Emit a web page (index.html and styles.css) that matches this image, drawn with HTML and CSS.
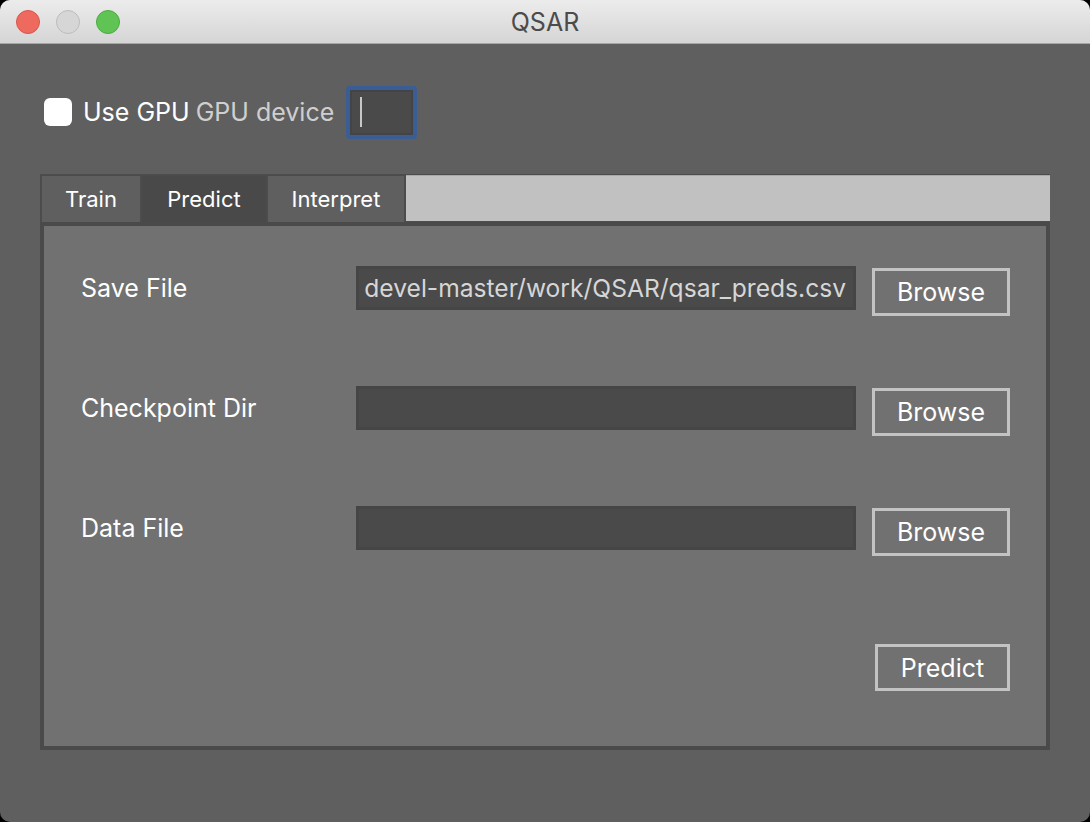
FILE: index.html
```html
<!DOCTYPE html>
<html>
<head>
<meta charset="utf-8">
<title>QSAR</title>
<link rel="stylesheet" href="styles.css">
</head>
<body>
<div class="window">
  <div class="titlebar">
    <div class="lights">
      <span class="light red"></span>
      <span class="light gray"></span>
      <span class="light green"></span>
    </div>
    <div class="title">QSAR</div>
  </div>
  <div class="content">
    <div class="gpu-row">
      <input type="checkbox" class="check">
      <span class="gpu-label">Use GPU</span>
      <span class="gpu-device">GPU device</span>
      <div class="spin"><span class="caret"></span></div>
    </div>
    <div class="tabs">
      <div class="tabbar">
        <div class="tab">Train</div>
        <div class="tab active">Predict</div>
        <div class="tab">Interpret</div>
        <div class="tab-fill"></div>
      </div>
      <div class="panel">
        <div class="row">
          <div class="label">Save File</div>
          <div class="field"><span class="field-text">devel-master/work/QSAR/qsar_preds.csv</span></div>
          <button class="btn">Browse</button>
        </div>
        <div class="row">
          <div class="label">Checkpoint Dir</div>
          <div class="field"></div>
          <button class="btn">Browse</button>
        </div>
        <div class="row">
          <div class="label">Data File</div>
          <div class="field"></div>
          <button class="btn">Browse</button>
        </div>
        <div class="action">
          <button class="btn predict">Predict</button>
        </div>
      </div>
    </div>
  </div>
</div>
</body>
</html>
```

FILE: styles.css
```css
* { box-sizing: border-box; }
html, body {
  margin: 0;
  padding: 0;
  background: #000;
}
body {
  font-family: "Inter", "Roboto", "Liberation Sans", sans-serif;
}
.window {
  width: 1090px;
  height: 822px;
  border-radius: 10px;
  overflow: hidden;
  background: #5f5f5f;
  display: flex;
  flex-direction: column;
}
.titlebar {
  height: 44px;
  flex: none;
  position: relative;
  background: linear-gradient(#ececec, #d5d5d5);
  border-bottom: 1px solid #a6a6a6;
  display: flex;
  align-items: center;
  justify-content: center;
}
.lights {
  position: absolute;
  left: 16px;
  top: 10px;
  display: flex;
  gap: 16px;
}
.light {
  width: 24px;
  height: 24px;
  border-radius: 50%;
  display: block;
}
.light.red { background: #ee6a5f; border: 1px solid #d8564c; }
.light.gray { background: #d6d6d6; border: 1px solid #bcbcbc; }
.light.green { background: #5fc454; border: 1px solid #4fa944; }
.title {
  font-size: 25px;
  color: #4b4b4b;
  margin-top: 1px;
}
.content {
  padding: 42px 40px 0 40px;
  display: flex;
  flex-direction: column;
}
.gpu-row {
  height: 52px;
  display: flex;
  align-items: center;
  padding-left: 4px;
}
.check {
  appearance: none;
  -webkit-appearance: none;
  margin: 0;
  width: 28px;
  height: 28px;
  border-radius: 6px;
  background: #fff;
  border: none;
}
.gpu-label {
  margin-left: 11px;
  font-size: 25px;
  color: #fff;
}
.gpu-device {
  margin-left: 6px;
  font-size: 25px;
  color: #cfcfcf;
}
.spin {
  margin-left: 12px;
  width: 71px;
  height: 53px;
  border: 4px solid #3a5d95;
  border-radius: 4px;
  background: #4a4a4a;
  box-shadow: inset 0 0 0 2px #444;
  display: flex;
  align-items: center;
  padding-left: 10px;
}
.caret {
  width: 2px;
  height: 30px;
  background: #c8c8c8;
  display: block;
}
.tabs {
  margin-top: 36px;
  width: 1010px;
  display: flex;
  flex-direction: column;
}
.tabbar {
  height: 48px;
  display: flex;
  background: #4c4c4c;
  padding: 2px 0 0 2px;
  gap: 2px;
}
.tab {
  display: flex;
  align-items: center;
  justify-content: center;
  font-size: 22px;
  color: #fff;
  background: #5f5f5f;
}
.tab:nth-child(1) { width: 98px; }
.tab:nth-child(2) { width: 124px; }
.tab:nth-child(3) { width: 136px; }
.tab.active { background: #494949; }
.tab-fill {
  flex: 1;
  background: #c1c1c1;
  border-top: 1px solid #a9a9a9;
  margin-top: -1px;
  margin-bottom: 1px;
}
.panel {
  height: 528px;
  border: 4px solid #4a4a4a;
  background: #717171;
  padding: 40px 36px 0 37px;
  display: flex;
  flex-direction: column;
  gap: 72px;
}
.row {
  height: 48px;
  display: flex;
  align-items: flex-start;
}
.label {
  width: 275px;
  height: 44px;
  display: flex;
  align-items: center;
  font-size: 25px;
  color: #fff;
}
.field {
  width: 500px;
  height: 44px;
  background: #4a4a4a;
  border: 3px solid #454545;
  overflow: hidden;
  display: flex;
  align-items: center;
  justify-content: flex-end;
  padding-right: 7px;
  white-space: nowrap;
}
.field-text {
  font-size: 24.6px;
  color: #d6d6d6;
  flex: none;
}
.btn {
  margin: 2px 0 0 16px;
  width: 138px;
  height: 48px;
  background: #717171;
  border: 3px solid #c3c3c3;
  color: #fff;
  font-family: inherit;
  font-size: 25px;
  padding: 0;
}
.action {
  margin-top: 18px;
  display: flex;
  justify-content: flex-end;
}
.predict {
  margin: 0;
  width: 135px;
  height: 47px;
}
```
